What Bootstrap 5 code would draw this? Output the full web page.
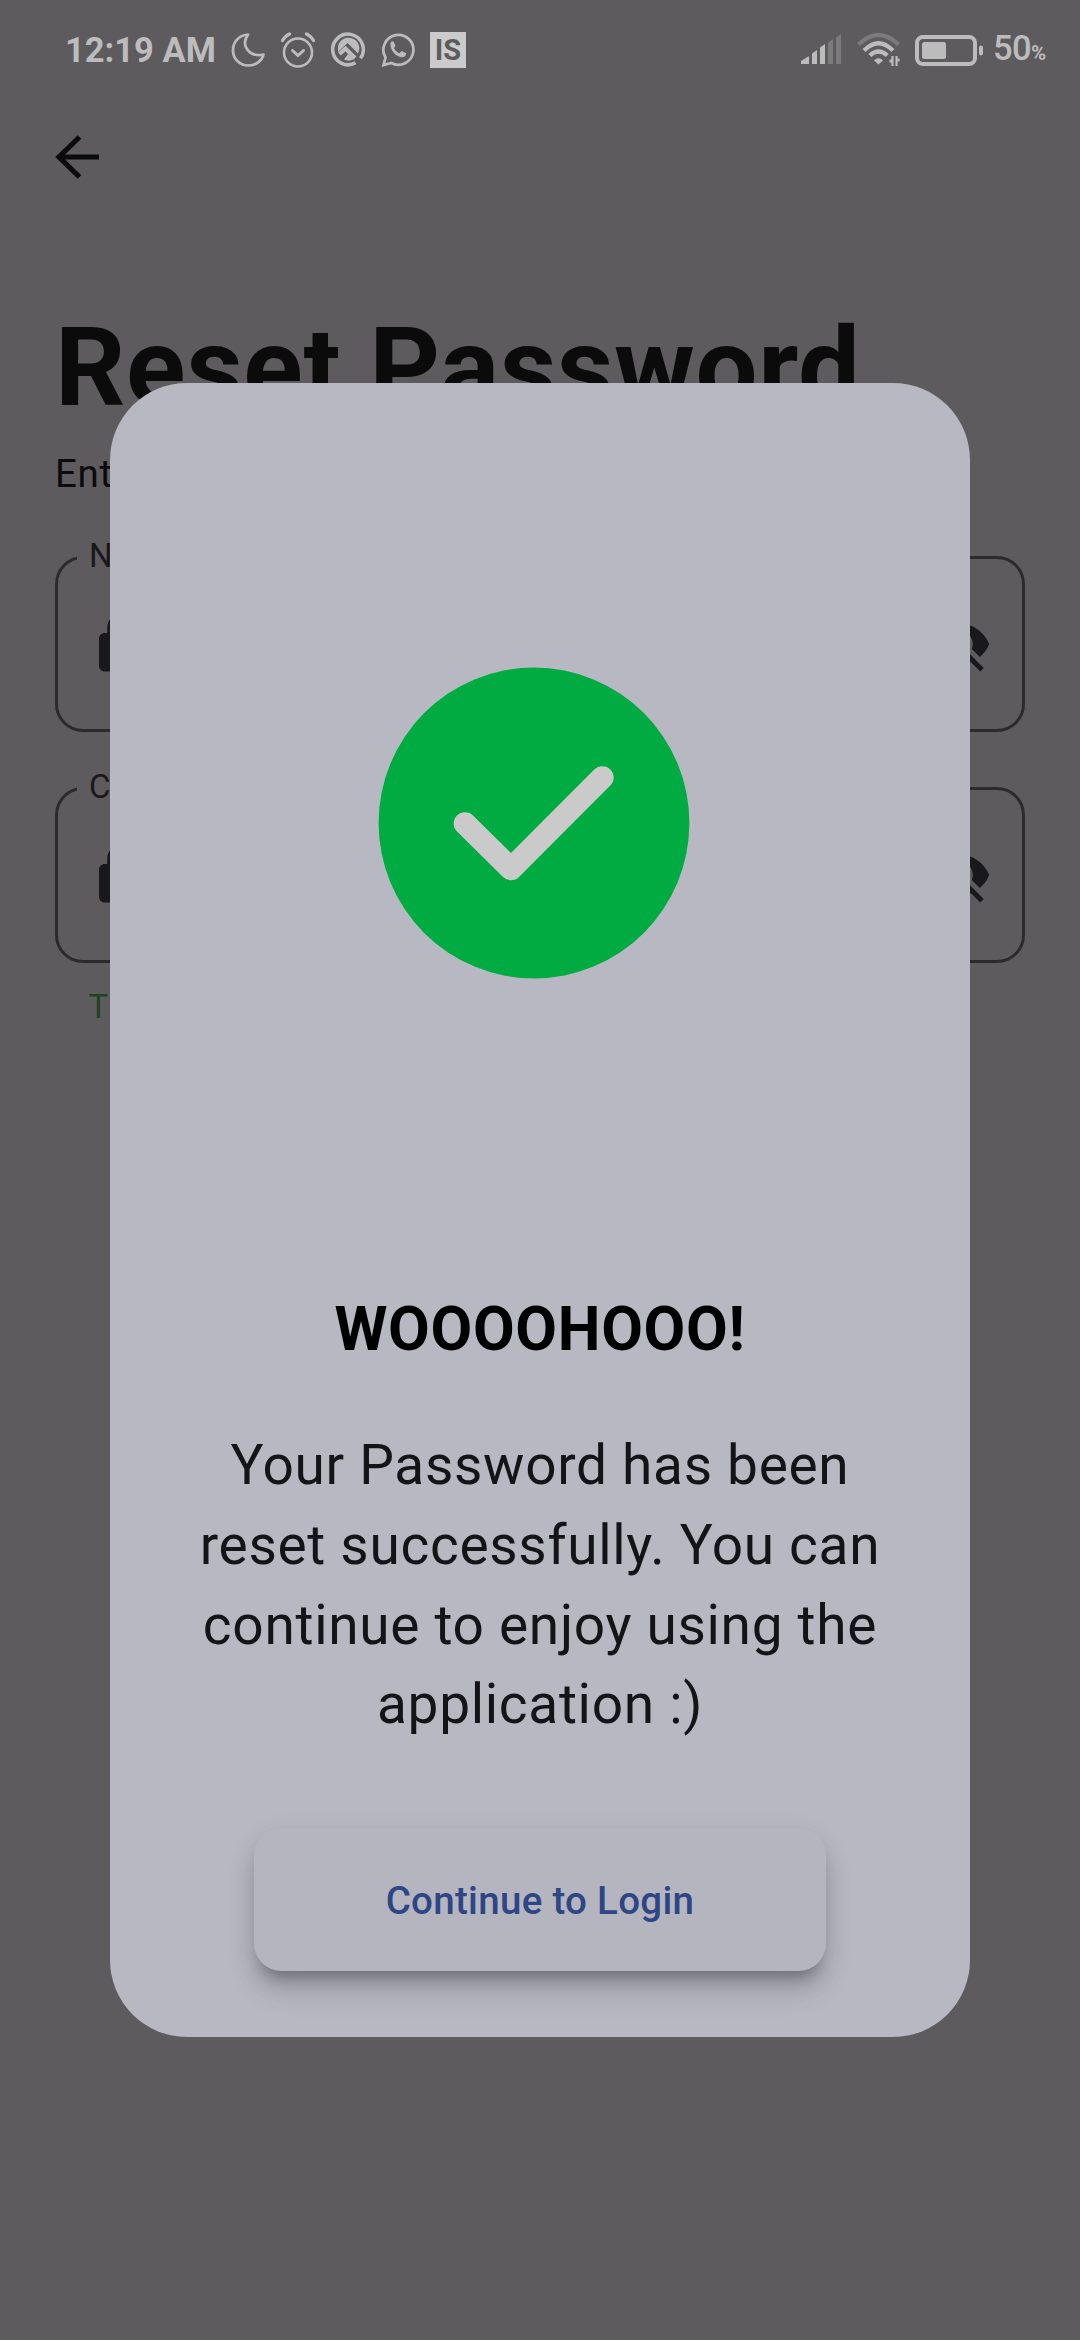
<!DOCTYPE html>
<html lang="en">
<head>
<meta charset="utf-8">
<meta name="viewport" content="width=device-width, initial-scale=1">
<title>Reset Password</title>
<link href="https://cdn.jsdelivr.net/npm/bootstrap@5.3.0/dist/css/bootstrap.min.css" rel="stylesheet">
<style>
  body { background: #5d5b5e; font-family: Roboto, "Liberation Sans", sans-serif; color: #0b0b0b; }
  svg { display: block; flex: none; }
  .screen { width: 1080px; height: 2340px; }
  .status-bar { height: 100px; padding: 0 34px 0 65px; color: #bcbcbc; }
  .clock { width: 166px; font-size: 34.5px; font-weight: 700; line-height: 100px; }
  .is-badge { width: 36px; height: 36px; margin-left: 15px; background: #cbcbcb; color: #5d5b5e; font-size: 29px; font-weight: 700; line-height: 36px; }
  .wifi { margin-left: 15px; }
  .battery { margin-left: 14px; }
  .level { width: 53px; font-size: 34.5px; font-weight: 500; line-height: 100px; margin-left: 9px; letter-spacing: -.6px; }
  .level small { font-size: 20.5px; font-weight: 700; }
  .app-bar { height: 114px; padding: 35px 0 0 55px; }
  .page-body { padding: 88.5px 55px 0; }
  .headline { font-size: 110px; font-weight: 700; line-height: 130px; margin: 0; letter-spacing: .65px; white-space: nowrap; }
  .intro { font-size: 38.5px; line-height: 56px; margin: 13.5px 0 0; letter-spacing: .7px; }
  .field { height: 176px; border: 3px solid #2b2b2d; border-radius: 28px; padding: 0 30px; }
  .field-one { margin-top: 53.5px; }
  .field-two { margin-top: 55px; }
  .field-label { top: -20px; left: 19px; padding: 0 12px; background: #5d5b5e; font-size: 33px; line-height: 33px; color: #19191b; }
  .helper { font-size: 33px; line-height: 44px; margin-top: 22px; padding-left: 33.5px; color: #1c4420; }
  .dialog-panel { width: 860px; height: 1654.5px; margin-top: 79.5px; border: 0; border-radius: 77px; background: #b8b8c3; padding-top: 284.5px; }
  .success-mark { margin-right: 12px; }
  .dialog-title { font-size: 60.5px; font-weight: 700; line-height: 80px; letter-spacing: .7px; margin: 310.5px 0 0; color: #000; white-space: nowrap; }
  .dialog-text { font-size: 55px; line-height: 79.75px; letter-spacing: .69px; margin: 56.5px 0 0; color: #141418; white-space: nowrap; }
  .login-btn, .login-btn:hover { width: 572px; height: 143px; margin-top: 83px; padding: 3px 0 0; border: 0; border-radius: 27.5px; background: #b5b5bf; color: #2e4685; font-size: 38.5px; font-weight: 500; letter-spacing: .3px; box-shadow: 0 14px 14px -8px rgba(0,0,0,.26), 0 22px 28px 0 rgba(0,0,0,.12), 0 8px 28px 0 rgba(0,0,0,.1); }
</style>
<script src="https://cdn.jsdelivr.net/npm/bootstrap@5.3.0/dist/js/bootstrap.bundle.min.js"></script>
</head>
<body>
<div class="screen position-relative overflow-hidden">
  <header class="status-bar d-flex align-items-center">
    <span class="clock text-nowrap">12:19 AM</span>
    <svg width="34" height="36" viewBox="0 0 34 36" fill="none" stroke="#bcbcbc" stroke-width="2.7" stroke-linejoin="round"><path d="M17 2.500C7 3.500 2 10.500 2 18A15 15 0 0 0 17 33.500C25 33.500 31 29 32.500 22.500C20 25.500 8.500 15 17 2.500Z"/></svg>
    <svg class="ms-3" width="34" height="36" viewBox="0 0 34 36" fill="none" stroke="#bcbcbc" stroke-width="2.600" stroke-linecap="round"><circle cx="17" cy="20.500" r="14"/><path d="M11.500 18.500l5.500 5 5.500-5" stroke-width="3"/><path d="M1.500 8.500Q4 4 8.500 2M25.500 2Q30 4 32.500 8.500" stroke-width="3.200"/></svg>
    <svg class="ms-3" width="34" height="36" viewBox="0 0 34 36" fill="none"><path d="M24.500 30.800A15.300 15.300 0 1 1 29.500 26.300" stroke="#bcbcbc" stroke-width="3.500"/><path d="M7 15A10.700 10.700 0 1 1 27 21.500L16.500 11 7 20Z" fill="#bcbcbc"/><path d="M8.500 22l6-5.500L24 26" stroke="#bcbcbc" stroke-width="4"/><path d="M13 27.500Q18 30 23 27L17 22Z" fill="#bcbcbc"/></svg>
    <svg class="ms-3" width="34" height="36" viewBox="0 0 34 36"><path d="M2.500 33L4.500 25.500A15 15 0 1 1 10.200 31Z" fill="none" stroke="#bcbcbc" stroke-width="2.700"/><path d="M9.500 12c0-2 1.500-3.200 3-2.500l2 4.300-1.500 2.400c1.300 2.500 3 4 5.500 5l2.200-2.200 4.500 2.200c0 3-2.700 4.500-5 4-6-1.300-10.700-6.500-10.700-13.200Z" fill="#bcbcbc"/></svg>
    <span class="is-badge d-flex align-items-center justify-content-center">IS</span>
    <svg class="ms-auto" width="41" height="32" viewBox="0 0 41 32" fill="#bcbcbc"><path d="M0 30v-3l8-5v8ZM11 30V19.500l5-3.500v14ZM19 30V13.500l5-3.500v20Z"/><path d="M27 30V8.500L32 5v25ZM35 30V3.500L40 0v30Z" fill="#7b7b7b"/></svg>
    <svg class="wifi" width="44" height="36" viewBox="0 0 44 36" fill="none" stroke="#bcbcbc" stroke-width="4.200"><path d="M1.500 12.500Q21.500-6.500 41.500 12.500" stroke="#7b7b7b"/><path d="M7 18.500Q21.500 4 36 18.500M12.800 23.500Q21.500 15.500 30.200 23.500"/><path d="M17 28.500Q21.500 24 26 28.500L21.500 32.500Z" fill="#bcbcbc" stroke="none"/><path d="M35.500 24v10M39.500 34V24" stroke-width="2.200"/><path d="M32.500 29h3M42.500 28h-3" stroke-width="3"/></svg>
    <svg class="battery" width="69" height="31" viewBox="0 0 69 31"><rect x="2" y="2" width="58" height="27" rx="6" fill="none" stroke="#bcbcbc" stroke-width="4"/><rect x="7" y="7" width="24" height="17" rx="2.500" fill="#bcbcbc"/><rect x="64" y="10.500" width="4" height="10" rx="2" fill="#bcbcbc"/></svg>
    <span class="level text-nowrap">50<small>%</small></span>
  </header>

  <nav class="app-bar">
    <svg width="45" height="44" viewBox="0 0 45 44" fill="none" stroke="#0b0b0b" stroke-width="5.200"><path d="M44 22H5M24.500 2L4 22l20.500 20"/></svg>
  </nav>

  <main class="page-body">
    <h1 class="headline">Reset Password</h1>
    <p class="intro">Enter</p>

    <div class="field field-one position-relative d-flex align-items-center justify-content-between">
      <span class="field-label position-absolute">New</span>
      <svg width="66" height="66" viewBox="0 0 24 24" fill="#19191d"><path d="M18 8h-1V6c0-2.760-2.240-5-5-5S7 3.240 7 6v2H6c-1.100 0-2 .9-2 2v10c0 1.100.9 2 2 2h12c1.100 0 2-.9 2-2V10c0-1.100-.9-2-2-2zM9 8V6c0-1.660 1.340-3 3-3s3 1.340 3 3v2H9z"/></svg>
      <svg width="66" height="66" viewBox="0 0 24 24" fill="#19191d"><path d="M12 7c2.760 0 5 2.240 5 5 0 .65-.13 1.260-.36 1.830l2.920 2.920c1.510-1.260 2.700-2.890 3.430-4.750-1.730-4.390-6-7.500-11-7.500-1.400 0-2.740.25-3.980.7l2.160 2.160C10.740 7.130 11.350 7 12 7zM2 4.270l2.740 2.740C3.080 8.300 1.780 10.020 1 12c1.730 4.390 6 7.500 11 7.500 1.550 0 3.030-.3 4.380-.84L19.730 22 21 20.730 3.270 3 2 4.270z"/></svg>
    </div>

    <div class="field field-two position-relative d-flex align-items-center justify-content-between">
      <span class="field-label position-absolute">Con</span>
      <svg width="66" height="66" viewBox="0 0 24 24" fill="#19191d"><path d="M18 8h-1V6c0-2.760-2.240-5-5-5S7 3.240 7 6v2H6c-1.100 0-2 .9-2 2v10c0 1.100.9 2 2 2h12c1.100 0 2-.9 2-2V10c0-1.100-.9-2-2-2zM9 8V6c0-1.660 1.340-3 3-3s3 1.340 3 3v2H9z"/></svg>
      <svg width="66" height="66" viewBox="0 0 24 24" fill="#19191d"><path d="M12 7c2.760 0 5 2.240 5 5 0 .65-.13 1.260-.36 1.830l2.920 2.920c1.510-1.260 2.700-2.890 3.430-4.750-1.730-4.390-6-7.500-11-7.500-1.400 0-2.740.25-3.980.7l2.160 2.160C10.740 7.130 11.350 7 12 7zM2 4.270l2.740 2.740C3.080 8.300 1.780 10.020 1 12c1.730 4.390 6 7.500 11 7.500 1.550 0 3.030-.3 4.380-.84L19.730 22 21 20.730 3.270 3 2 4.270z"/></svg>
    </div>
    <div class="helper">T</div>
  </main>

  <div class="position-absolute top-0 start-0 w-100 h-100 d-flex align-items-center justify-content-center">
    <section class="dialog-panel d-flex flex-column align-items-center text-center" role="dialog">
      <svg class="success-mark" width="312" height="312" viewBox="0 0 312 312"><circle cx="156" cy="156" r="155.400" fill="#00ab41"/><path d="M87 156.500l46 45.500 91.300-91.500" fill="none" stroke="#cacaca" stroke-width="22.700" stroke-linecap="round" stroke-linejoin="round"/></svg>
      <h2 class="dialog-title">WOOOOHOOO!</h2>
      <p class="dialog-text">Your Password has been<br>reset successfully. You can<br>continue to enjoy using the<br>application :)</p>
      <button type="button" class="btn login-btn">Continue to Login</button>
    </section>
  </div>
</div>
</body>
</html>
